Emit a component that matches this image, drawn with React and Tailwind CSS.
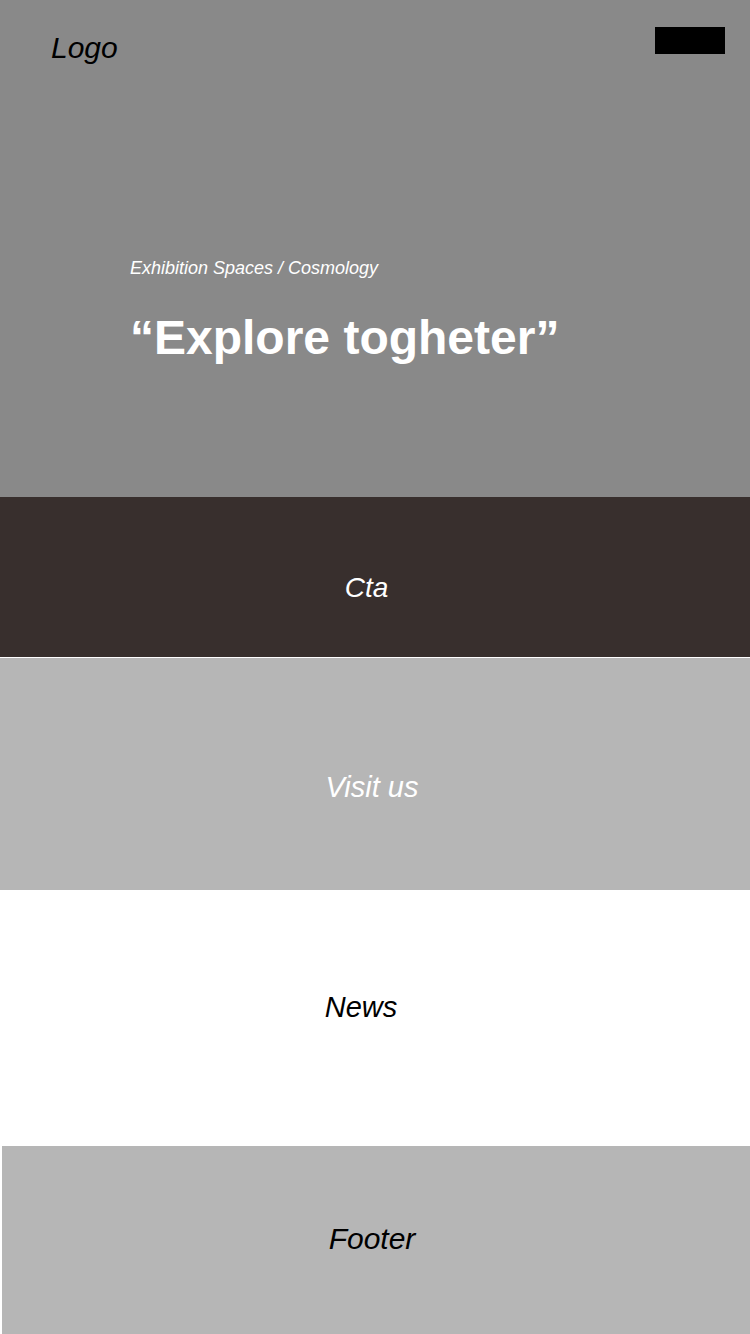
export default function App() {
  return (
    <div className="w-[750px] min-h-[1334px] bg-white" style={{ fontFamily: '"Liberation Sans", Arial, sans-serif' }}>
      <section className="h-[497px] bg-[#898989]">
        <header className="flex items-start justify-between pt-[27px] pl-[51px] pr-[25px]">
          <div className="mt-[4px] text-[30px] leading-[34px] italic text-black">Logo</div>
          <div className="w-[70px] h-[27px] bg-black" />
        </header>
        <div className="pl-[130px]">
          <p className="mt-[193px] text-[18px] leading-[21px] italic text-white">Exhibition Spaces / Cosmology</p>
          <h1 className="mt-[31px] text-[48px] leading-[56px] font-bold text-white">“Explore togheter”</h1>
        </div>
      </section>
      <section className="h-[160px] bg-[#382f2d] pt-[75px] flex justify-center pr-[17px]">
        <span className="text-[28px] leading-[32px] italic text-white">Cta</span>
      </section>
      <div className="h-px bg-white" />
      <section className="h-[232px] bg-[#b6b6b6] pt-[113px] flex justify-center pr-[6px]">
        <span className="text-[29px] leading-[33px] italic text-white">Visit us</span>
      </section>
      <section className="h-[256px] bg-white pt-[101px] flex justify-center pr-[28px]">
        <span className="text-[29px] leading-[33px] italic text-black">News</span>
      </section>
      <div className="pl-[2px]">
        <section className="h-[188px] bg-[#b6b6b6] pt-[76px] flex justify-center pr-[8px]">
          <span className="text-[30px] leading-[34px] italic text-black">Footer</span>
        </section>
      </div>
    </div>
  );
}
